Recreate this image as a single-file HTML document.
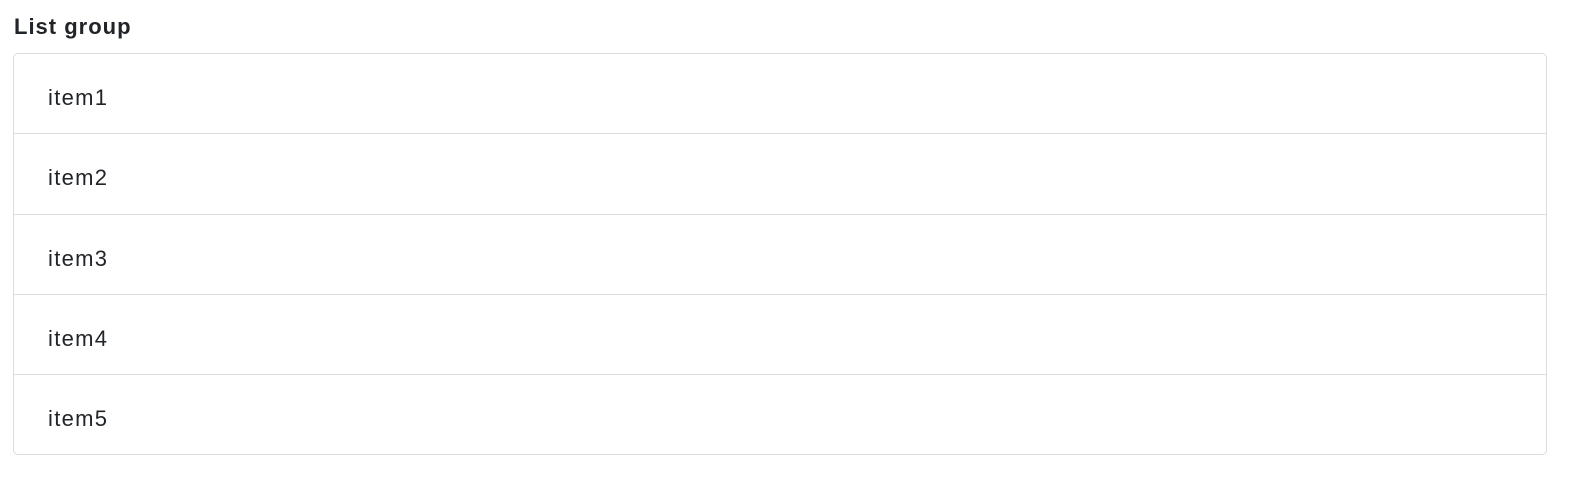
<!DOCTYPE html>
<html><head><style>
body{margin:0;background:#fff;font-family:"Liberation Sans",sans-serif;color:#212529;}
h3{position:absolute;left:14px;top:13px;margin:0;font-size:22px;font-weight:bold;line-height:28px;letter-spacing:1px;}
.lg{position:absolute;left:13px;top:53px;width:1532px;border:1px solid #dcdcdc;border-radius:5px;}
.it{height:79px;line-height:79px;padding-left:34px;padding-top:4px;font-size:22px;letter-spacing:1.3px;border-top:1px solid #dcdcdc;box-sizing:border-box;}
.it:first-child{border-top:none;height:79px;}
</style></head><body>
<h3>List group</h3>
<div class="lg">
<div class="it">item1</div>
<div class="it" style="height:81px">item2</div>
<div class="it" style="height:80px">item3</div>
<div class="it" style="height:80px">item4</div>
<div class="it" style="height:80px">item5</div>
</div>
</body></html>
